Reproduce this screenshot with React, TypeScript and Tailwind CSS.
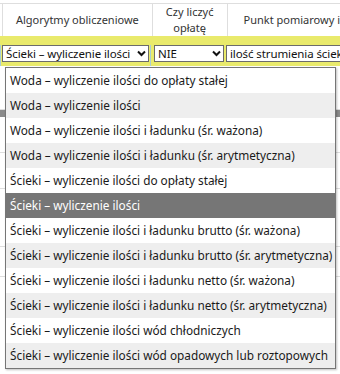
import React from 'react';

const OPTIONS = [
  'Woda – wyliczenie ilości do opłaty stałej',
  'Woda – wyliczenie ilości',
  'Woda – wyliczenie ilości i ładunku (śr. ważona)',
  'Woda – wyliczenie ilości i ładunku (śr. arytmetyczna)',
  'Ścieki – wyliczenie ilości do opłaty stałej',
  'Ścieki – wyliczenie ilości',
  'Ścieki – wyliczenie ilości i ładunku brutto (śr. ważona)',
  'Ścieki – wyliczenie ilości i ładunku brutto (śr. arytmetyczna)',
  'Ścieki – wyliczenie ilości i ładunku netto (śr. ważona)',
  'Ścieki – wyliczenie ilości i ładunku netto (śr. arytmetyczna)',
  'Ścieki – wyliczenie ilości wód chłodniczych',
  'Ścieki – wyliczenie ilości wód opadowych lub roztopowych',
];

const SELECTED = 5;

const Chevron = () => (
  <svg width="9" height="7" viewBox="0 0 9 7" className="shrink-0">
    <path d="M1 1.5 L4.5 5 L8 1.5" fill="none" stroke="#111" strokeWidth="2" />
  </svg>
);

const Select: React.FC<{ value: string; className: string; chevron?: boolean }> = ({ value, className, chevron = true }) => (
  <div className={`flex items-center h-[17px] bg-white border border-[#6b6b6b] pl-[3px] pr-[2px] gap-1 overflow-hidden ${className}`}>
    <span className="flex-1 whitespace-nowrap overflow-hidden text-[11.5px] leading-[15px] text-[#111] tracking-[-0.1px]">{value}</span>
    {chevron && <Chevron />}
  </div>
);

export default function App() {
  return (
    <div className="relative w-[340px] h-[374px] overflow-hidden bg-white text-[#333]" style={{ fontFamily: '"Noto Sans", sans-serif' }}>
      <div className="pt-[3px]">
        <div className="border-t border-[#dedede] flex h-[33px] text-[11px] leading-[16px] text-[#333]">
          <div className="w-[3px] border-r border-[#dedede]" />
          <div className="w-[150px] border-r border-[#dedede] flex items-center justify-center">Algorytmy obliczeniowe</div>
          <div className="w-[75px] border-r border-[#dedede] flex items-center justify-center text-center">Czy liczyć<br />opłatę</div>
          <div className="flex-1 flex items-center pl-[16px] whitespace-nowrap">Punkt pomiarowy i</div>
        </div>
        <div className="flex h-[30px] bg-[#e9ea6c] items-start pt-[9px]">
          <div className="w-[3px] h-full border-r border-[#a9cfd6]" />
          <div className="w-[150px] h-full pl-[1px] pr-[1px] border-r border-[#a9cfd6]">
            <Select value="Ścieki – wyliczenie ilości" className="w-[147px]" />
          </div>
          <div className="w-[75px] pl-[3px]">
            <Select value="NIE" className="w-[70px]" />
          </div>
          <div className="flex-1 pl-[2px]">
            <Select value="ilość strumienia ścieków" className="w-[140px]" chevron={false} />
          </div>
        </div>
        <div className="flex flex-col">
          <div className="h-[44px] border-b border-[#dedede]" />
          <div className="h-[7px] bg-[#8a8a8a]" />
          <div className="h-[36px] border-b border-[#dedede]" />
          <div className="h-[36px] border-b border-[#dedede]" />
          <div className="h-[58px] border-b border-[#dedede]" />
          <div className="h-[30px] border-b border-[#dedede]" />
        </div>
      </div>

      <div className="absolute left-[5px] top-[67px] w-[331px] border border-[#767676] bg-white shadow-[1px_1px_2px_rgba(0,0,0,0.25)]">
        {OPTIONS.map((o, i) => (
          <div
            key={o}
            className={`h-[25px] flex items-center pl-[4px] whitespace-nowrap text-[11.8px] ${i === SELECTED ? 'bg-[#767676] text-white' : i % 2 === 1 ? 'bg-[#eeeeee] text-[#1a1a1a]' : 'bg-white text-[#1a1a1a]'}`}
          >
            {o}
          </div>
        ))}
      </div>
    </div>
  );
}
